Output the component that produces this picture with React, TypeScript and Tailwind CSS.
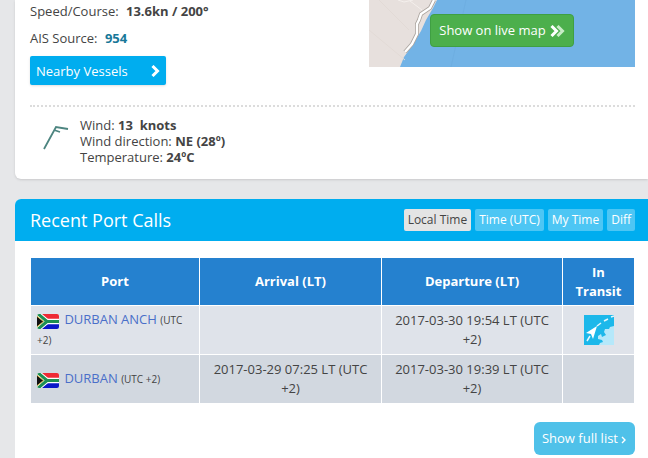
const times = ["Local Time", "Time (UTC)", "My Time", "Diff"];

interface PortCall {
  port: string;
  arrival: string;
  departure: string;
  transit: boolean;
}

const calls: PortCall[] = [
  {
    port: "DURBAN ANCH",
    arrival: "",
    departure: "2017-03-30 19:54 LT (UTC +2)",
    transit: true,
  },
  {
    port: "DURBAN",
    arrival: "2017-03-29 07:25 LT (UTC +2)",
    departure: "2017-03-30 19:39 LT (UTC +2)",
    transit: false,
  },
];

const Flag = () => (
  <svg
    viewBox="0 0 22 15"
    className="inline-block w-[22px] h-[15px] mr-[2px] rounded-xs align-[-5px]"
    role="img"
    aria-label="South Africa"
  >
    <rect width="22" height="15" fill="#fff" />
    <path d="M3 0H22V4.7H10Z" fill="#ee2a35" />
    <path d="M3 15H22V10.3H10Z" fill="#0a17c8" />
    <path d="M0 -1L10 7.5H22M0 16L10 7.5" fill="none" stroke="#fff" strokeWidth="5" />
    <path d="M0 -1L10 7.5H22M0 16L10 7.5" fill="none" stroke="#1d8f52" strokeWidth="3" />
    <path d="M-1 1.5L6.5 7.5L-1 13.5Z" fill="#111" stroke="#d9b64a" strokeWidth="1" />
  </svg>
);

const TransitIcon = () => (
  <svg
    viewBox="0 0 30 30"
    className="block mx-auto w-[30px] h-[30px]"
    role="img"
    aria-label="In transit"
  >
    <rect width="30" height="30" fill="#1cb8ea" />
    <path
      d="M30 11L26 12L25 14L21 14L20 17L22 20L18 22L17 19L14 21L14 24L18 25L19 27L16 28L15 30H30Z"
      fill="#b5e8fa"
    />
    <path d="M13 11L2 18L7 19L9 24Z" fill="#fff" />
    <path
      d="M13 11L17 8M20 6L24 4M27 2L30 1M6 21L3 26"
      stroke="#e4f7fd"
      strokeWidth="1.5"
    />
  </svg>
);

const MapPicture = () => (
  <svg
    viewBox="0 0 266 67"
    preserveAspectRatio="xMinYMin slice"
    className="absolute inset-0 w-full h-full"
    aria-hidden="true"
  >
    <rect width="266" height="67" fill="#72b3e6" />
    <path d="M0 0H68L64 8L57 20L52 31L43 46L35 57L31 67H0Z" fill="#e7e0dd" />
    <path
      d="M65 0L61 8L52 14L50 20L48 24V34L43 44L36 52"
      fill="none"
      stroke="#aaa39d"
      strokeWidth="4"
    />
    <path
      d="M65 0L61 8L52 14L50 20L48 24V34L43 44L36 52"
      fill="none"
      stroke="#fff"
      strokeWidth="2.4"
    />
    <path d="M29 0L35 2L44 0M41 1L53 10" fill="none" stroke="#f4efec" />
    <path d="M0 30L36 60M10 0L40 30" fill="none" stroke="#e2dad6" />
    <path d="M97 0L82 67" stroke="#6eaee1" />
  </svg>
);

const VesselPanel = () => (
  <section className="bg-white rounded-bl-md pl-[15px] pr-[13px] pb-[14px] mb-5 shadow-sm">
    <div className="flex justify-between">
      <div className="leading-[27px]">
        <p className="-mt-[2px]">
          Speed/Course: <b className="ml-1">13.6kn / 200°</b>
        </p>
        <p>
          AIS Source:{" "}
          <a href="#source" className="ml-1 font-bold text-[#187899]">
            954
          </a>
        </p>
        <button className="flex items-center justify-between w-[136px] h-[29px] mt-1 px-[6px] pt-px rounded-xs bg-[#00adef] text-white shadow-sm">
          Nearby Vessels
          <svg viewBox="0 0 9 12" className="w-[9px] h-3" aria-hidden="true">
            <path d="M1.5 1L6.5 6L1.5 11" fill="none" stroke="#fff" strokeWidth="3" />
          </svg>
        </button>
      </div>
      <div className="relative flex items-start justify-center w-[266px] h-[67px] pt-[14px]">
        <MapPicture />
        <button className="relative flex items-center gap-1 h-[33px] px-2 rounded-sm border border-[#3f9f43] bg-[#4caf4c] text-white">
          Show on live map
          <svg viewBox="0 0 15 12" className="w-[15px] h-3" aria-hidden="true">
            <path d="M1.5 1L6.5 6L1.5 11" fill="none" stroke="#fff" strokeWidth="3" />
            <path d="M7.5 1L12.5 6L7.5 11" fill="none" stroke="#c8ecc6" strokeWidth="3" />
          </svg>
        </button>
      </div>
    </div>
    <hr className="mt-5 border-0 border-t-2 border-dotted border-[#dcdcdc]" />
    <div className="flex mt-[10px] pl-3">
      <svg viewBox="0 0 28 28" className="w-7 h-7 mt-[6px] mr-[10px]" aria-hidden="true">
        <path
          d="M2 26L14 4L26 6M12 7L18 9"
          fill="none"
          stroke="#4d8580"
          strokeWidth="1.8"
        />
      </svg>
      <div className="leading-4">
        <p>
          Wind: <b>13 &nbsp;knots</b>
        </p>
        <p>
          Wind direction: <b>NE (28º)</b>
        </p>
        <p>
          Temperature: <b>24ºC</b>
        </p>
      </div>
    </div>
  </section>
);

const RecentPortCalls = () => (
  <section className="bg-white rounded-tl-md">
    <div className="flex items-center justify-between h-[42px] pl-[15px] pr-[13px] rounded-tl-md bg-[#00adef] text-white">
      <h2 className="text-[18px]">Recent Port Calls</h2>
      <div className="flex gap-1">
        {times.map((t, i) => (
          <button
            key={t}
            className={
              i === 0
                ? "h-[22px] px-1 rounded-xs text-[12px] bg-[#e4e4e4] text-[#444]"
                : "h-[22px] px-1 rounded-xs text-[12px] bg-[#4dc6f4] text-white"
            }
          >
            {t}
          </button>
        ))}
      </div>
    </div>
    <div className="pt-4 pl-[15px] pr-[13px]">
      <table className="w-full table-fixed border-collapse leading-[19px] text-center">
        <thead>
          <tr className="h-12 bg-[#2581cf] text-white">
            <th className="border border-white">Port</th>
            <th className="w-[182px] border border-white">Arrival (LT)</th>
            <th className="w-[181px] border border-white">Departure (LT)</th>
            <th className="w-[72px] px-2 border border-white">In Transit</th>
          </tr>
        </thead>
        <tbody>
          {calls.map((c) => (
            <tr key={c.port} className="h-[49px] odd:bg-[#dfe3ea] even:bg-[#d2d8e0]">
              <td className="px-[6px] border border-white text-left">
                <Flag />{" "}
                <a href="#port" className="text-[#4a6fc9]">
                  {c.port}
                </a>{" "}
                <span className="text-[10px]">(UTC +2)</span>
              </td>
              <td className="px-2 border border-white">{c.arrival}</td>
              <td className="px-2 border border-white">{c.departure}</td>
              <td className="border border-white">{c.transit && <TransitIcon />}</td>
            </tr>
          ))}
        </tbody>
      </table>
      <div className="flex justify-end mt-[18px] pb-[3px]">
        <button className="flex items-center gap-[3px] h-[33px] px-2 rounded-md bg-[#4fc1e9] text-white">
          Show full list
          <svg viewBox="0 0 6 8" className="w-[6px] h-2 mt-[2px]" aria-hidden="true">
            <path d="M1 1L4 4L1 7" fill="none" stroke="#fff" strokeWidth="1.4" />
          </svg>
        </button>
      </div>
    </div>
  </section>
);

const App = () => {
  return (
    <div className="min-h-screen bg-[#e6e7e9] pl-[15px] text-[13px] text-[#444] font-['Open_Sans',sans-serif]">
      <VesselPanel />
      <RecentPortCalls />
    </div>
  );
};

export default App;
